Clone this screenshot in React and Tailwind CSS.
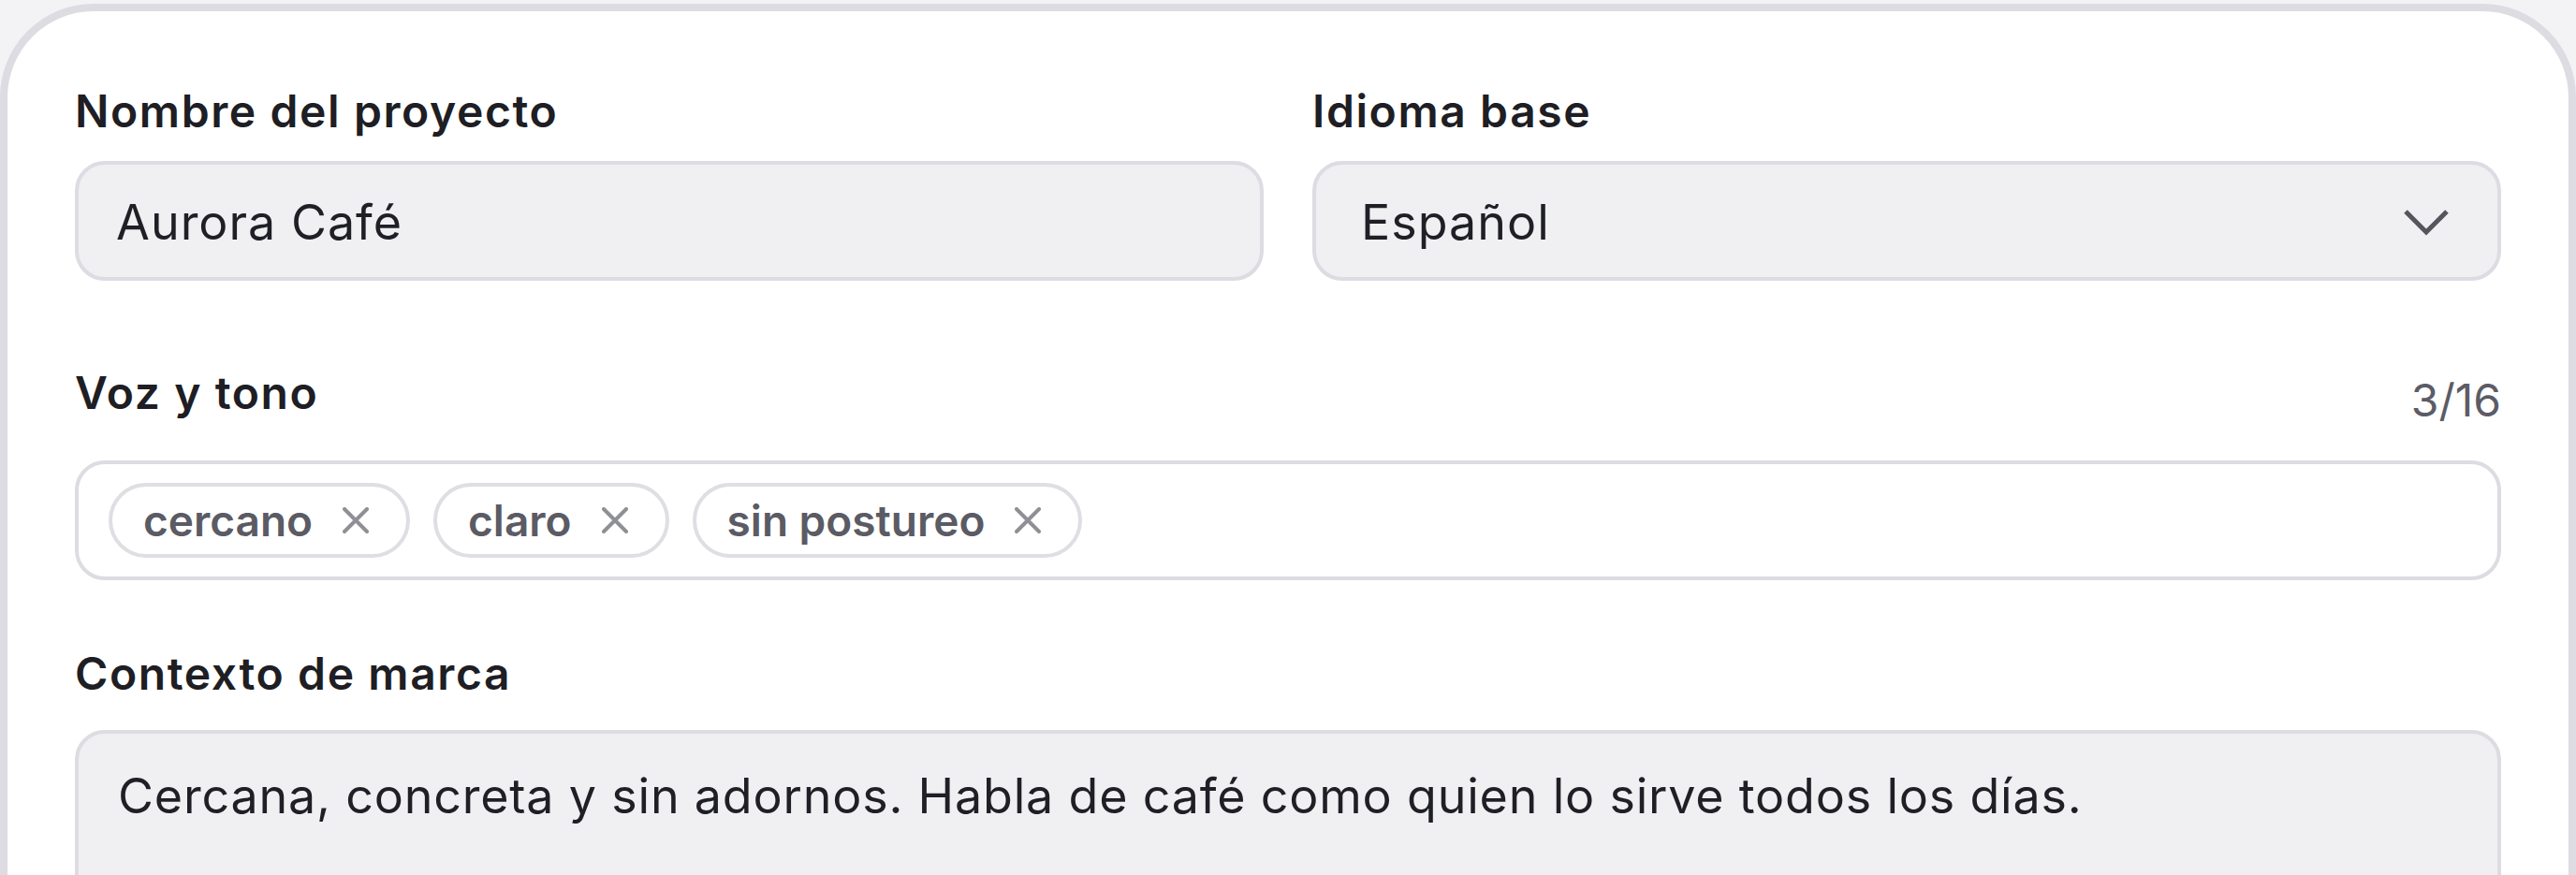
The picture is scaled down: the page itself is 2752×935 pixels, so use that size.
import { useState } from 'react'

const tags = ['cercano', 'claro', 'sin postureo']

function Tag({ label }) {
  return (
    <span className="flex h-[80px] items-center gap-[32px] rounded-full border-[4px] border-[#dedee3] bg-white pl-[33px] pr-[40px]">
      <span className="text-[46px] font-semibold leading-none text-[#5b5b64]">{label}</span>
      <svg width="28" height="28" viewBox="0 0 28 28" fill="none" stroke="#8f8f96" strokeWidth="4" strokeLinecap="round">
        <path d="M2 2 26 26M26 2 2 26" />
      </svg>
    </span>
  )
}

export default function App() {
  const [name] = useState('Aurora Café')

  return (
    <div className="h-[935px] overflow-hidden bg-[#f3f3f5] pt-[4px] font-['Inter',sans-serif]">
      <div className="h-[1100px] rounded-[100px] border-[8px] border-[#dcdce2] bg-white px-[72px] pt-[77px]">
        {/* nombre + idioma */}
        <div className="grid grid-cols-2 gap-x-[52px]">
          <div>
            <div className="mb-[23px] text-[48px] font-semibold leading-[60px] tracking-[1.6px] text-[#1e1e24]">
              Nombre del proyecto
            </div>
            <div className="flex h-[128px] items-center rounded-[32px] border-[4px] border-[#dcdce2] bg-[#f0f0f3] pl-[40px] pt-[4px] text-[52px] tracking-[1px] text-[#1f1f26]">
              {name}
            </div>
          </div>
          <div>
            <div className="mb-[23px] text-[48px] font-semibold leading-[60px] tracking-[1.6px] text-[#1e1e24]">
              Idioma base
            </div>
            <div className="flex h-[128px] items-center justify-between rounded-[32px] border-[4px] border-[#dcdce2] bg-[#f0f0f3] pl-[48px] pr-[52px] pt-[4px] text-[52px] tracking-[1px] text-[#1f1f26]">
              <span>Español</span>
              <svg width="48" height="28" viewBox="0 0 48 28" fill="none" stroke="#55555e" strokeWidth="5">
                <polyline points="2,2 24,24 46,2" />
              </svg>
            </div>
          </div>
        </div>

        {/* voz y tono */}
        <div className="mt-[90px] flex items-end justify-between">
          <div className="text-[48px] font-semibold leading-[60px] tracking-[1.6px] text-[#1e1e24]">Voz y tono</div>
          <div className="text-[48px] leading-[44px] text-[#5c5c66]">3/16</div>
        </div>
        <div className="mt-[42px] flex gap-[25px] rounded-[32px] border-[4px] border-[#dcdce2] bg-white px-[32px] py-[20px]">
          {tags.map((t) => (
            <Tag key={t} label={t} />
          ))}
        </div>

        {/* contexto */}
        <div className="mt-[70px] text-[48px] font-semibold leading-[60px] tracking-[1.6px] text-[#1e1e24]">
          Contexto de marca
        </div>
        <div className="mt-[30px] h-[320px] rounded-[32px] border-[4px] border-[#dcdce2] bg-[#f0f0f3] pl-[42px] pt-[28px] text-[52px] leading-[78px] tracking-[0.8px] text-[#1f1f26]">
          Cercana, concreta y sin adornos. Habla de café como quien lo sirve todos los días.
        </div>
      </div>
    </div>
  )
}
